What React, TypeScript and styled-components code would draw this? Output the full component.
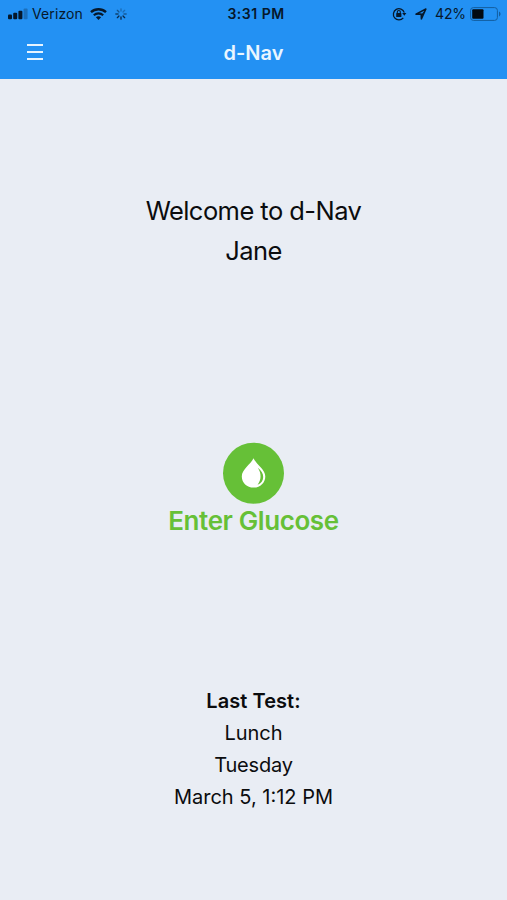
import React from "react";
import styled, { createGlobalStyle } from "styled-components";

const GlobalStyle = createGlobalStyle`
  * { box-sizing: border-box; }
  body {
    margin: 0;
    background: #e9edf4;
    font-family: Inter, "Liberation Sans", sans-serif;
    color: #0b0c0e;
  }
`;

const Screen = styled.div`
  width: 507px;
  height: 900px;
  display: flex;
  flex-direction: column;
  background: #e9edf4;
  overflow: hidden;
`;

const Header = styled.header`
  height: 79px;
  flex: none;
  background: #2391f3;
`;

const StatusBar = styled.div`
  display: grid;
  grid-template-columns: 1fr auto 1fr;
  align-items: center;
  height: 27px;
  padding: 0 5px 0 8px;
  color: #06182b;
  font-size: 14px;
  line-height: 27px;
`;

const StatusGroup = styled.div<{ $end?: boolean }>`
  display: flex;
  align-items: center;
  justify-content: ${(p) => (p.$end ? "flex-end" : "flex-start")};
  svg { display: block; flex: none; }
`;

const Carrier = styled.span`
  margin: 0 7px 0 4px;
  letter-spacing: 0.1px;
`;

const Clock = styled.span`
  font-weight: 600;
  font-size: 14px;
  letter-spacing: 0.5px;
  padding-left: 2px;
`;

const Percent = styled.span`
  margin: 0 4px 0 8px;
  letter-spacing: -0.1px;
`;

const SpinnerSlot = styled.span`
  margin-left: 8px;
`;

const ArrowSlot = styled.span`
  margin-left: 8px;
`;

const NavBar = styled.div`
  display: grid;
  grid-template-columns: 60px 1fr 60px;
  align-items: center;
  height: 52px;
`;

const MenuButton = styled.button`
  border: 0;
  background: none;
  width: 16px;
  height: 16px;
  margin: -2px 0 0 27px;
  padding: 0;
  display: flex;
  flex-direction: column;
  justify-content: space-between;
`;

const MenuLine = styled.span`
  display: block;
  width: 16px;
  height: 2px;
  background: #e6f4ff;
`;

const Title = styled.h1`
  margin: 0;
  text-align: center;
  font-size: 20px;
  font-weight: 600;
  line-height: 52px;
  color: #eaf6ff;
`;

const Main = styled.main`
  flex: 1;
  display: flex;
  flex-direction: column;
  align-items: center;
`;

const Welcome = styled.section`
  margin-top: 112px;
  text-align: center;
  font-size: 25.5px;
  line-height: 39.5px;
  letter-spacing: -0.55px;
`;

const GlucoseButton = styled.button`
  margin-top: 172px;
  border: 0;
  padding: 0;
  background: none;
  display: flex;
  flex-direction: column;
  align-items: center;
  font-family: inherit;
  color: #66c037;
  svg { display: block; }
`;

const GlucoseLabel = styled.span`
  margin-top: 1px;
  font-size: 26px;
  font-weight: 600;
  line-height: 32px;
  letter-spacing: -0.4px;
`;

const LastTest = styled.section`
  margin-top: 148px;
  text-align: center;
  font-size: 20px;
  line-height: 32px;
`;

const TestLine = styled.div<{ $spacing: number; $strong?: boolean }>`
  letter-spacing: ${(p) => p.$spacing}px;
  font-weight: ${(p) => (p.$strong ? 600 : 400)};
`;

const Signal = () => (
  <svg width="20" height="12" viewBox="0 0 20 12" fill="#06182b">
    <rect x="0" y="6.5" width="4" height="4.7" rx="1" />
    <rect x="5.2" y="4.8" width="4" height="6.4" rx="1" />
    <rect x="10.4" y="2.7" width="4" height="8.5" rx="1" />
    <rect x="15.6" y="0.5" width="4" height="10.7" rx="1" opacity="0.28" />
  </svg>
);

const Wifi = () => (
  <svg width="17" height="12" viewBox="0 0 17 12" fill="none" stroke="#06182b">
    <path d="M1 4.2C5.2 0.3 11.8 0.3 16 4.2" strokeWidth="2.4" />
    <path d="M3.8 7.2C6.5 4.7 10.5 4.7 13.2 7.2" strokeWidth="2.1" />
    <path d="M8.5 12L5.9 9.3C7.4 8 9.6 8 11.1 9.3Z" fill="#06182b" stroke="none" />
  </svg>
);

const Spinner = () => (
  <svg width="12" height="12" viewBox="0 0 12 12" stroke="#06182b" strokeWidth="1.3" strokeLinecap="round">
    {[0.3, 0.3, 0.45, 0.85, 0.85, 0.85, 0.65, 0.5].map((opacity, i) => (
      <path key={i} d="M6 3.1V0.8" transform={`rotate(${i * 45} 6 6)`} opacity={opacity} />
    ))}
  </svg>
);

const RotationLock = () => (
  <svg width="15" height="14" viewBox="0 0 15 14" fill="none" stroke="#06182b">
    <path d="M12.3 5.6A5.6 5.6 0 1 0 11.3 10.9" strokeWidth="1.3" />
    <path d="M10.2 6H14.4L12.3 8.7Z" fill="#06182b" stroke="none" />
    <rect x="4.2" y="6.1" width="5.2" height="4" rx="0.6" fill="#06182b" stroke="none" />
    <path d="M5.3 6.4V5A1.5 1.5 0 0 1 8.3 5V6.4" strokeWidth="1.1" />
  </svg>
);

const LocationArrow = () => (
  <svg width="12" height="12" viewBox="0 0 12 12">
    <path
      d="M1 6.2L10.9 1L6.4 10.9L6.2 6.1Z"
      fill="none"
      stroke="#06182b"
      strokeWidth="1.5"
      strokeLinejoin="round"
    />
    <path d="M7 5.8L10.8 1.2L6.6 9.5Z" fill="#06182b" />
  </svg>
);

const Battery = () => (
  <svg width="32" height="14" viewBox="0 0 32 14">
    <rect x="0.6" y="0.6" width="26.8" height="12.8" rx="2.8" fill="none" stroke="#135d9e" strokeWidth="1" />
    <rect x="2.2" y="2.2" width="11.3" height="9.6" rx="1" fill="#020a12" />
    <path d="M29 4.6C31 5.4 31 8.6 29 9.4Z" fill="#135d9e" />
  </svg>
);

const DropIcon = () => (
  <svg width="61" height="62" viewBox="0 0 61 62">
    <circle cx="30.5" cy="31.2" r="30.5" fill="#66c037" />
    <path
      d="M30.5 16.3C33.3 22.3 42.3 27.6 42.3 34.4C42.3 40.8 37 45.6 30.5 45.6C24 45.6 18.8 40.8 18.8 34.4C18.8 27.6 27.7 22.3 30.5 16.3Z"
      fill="#fff"
    />
    <path
      d="M34.8 25.8C38.5 28.8 40.2 31.8 40.2 35C40.2 38.5 38.2 41.4 34.6 42.8C38.5 38 38.6 31.4 34.8 25.8Z"
      fill="#66c037"
    />
  </svg>
);

export default function App() {
  return (
    <>
      <GlobalStyle />
      <Screen>
        <Header>
          <StatusBar>
            <StatusGroup>
              <Signal />
              <Carrier>Verizon</Carrier>
              <Wifi />
              <SpinnerSlot><Spinner /></SpinnerSlot>
            </StatusGroup>
            <Clock>3:31 PM</Clock>
            <StatusGroup $end>
              <RotationLock />
              <ArrowSlot><LocationArrow /></ArrowSlot>
              <Percent>42%</Percent>
              <Battery />
            </StatusGroup>
          </StatusBar>
          <NavBar>
            <MenuButton aria-label="Menu">
              <MenuLine />
              <MenuLine />
              <MenuLine />
            </MenuButton>
            <Title>d-Nav</Title>
          </NavBar>
        </Header>
        <Main>
          <Welcome>
            <div>Welcome to d-Nav</div>
            <div>Jane</div>
          </Welcome>
          <GlucoseButton>
            <DropIcon />
            <GlucoseLabel>Enter Glucose</GlucoseLabel>
          </GlucoseButton>
          <LastTest>
            <TestLine $spacing={0.05} $strong>Last Test:</TestLine>
            <TestLine $spacing={-0.05}>Lunch</TestLine>
            <TestLine $spacing={-0.2}>Tuesday</TestLine>
            <TestLine $spacing={0}>March 5, 1:12 PM</TestLine>
          </LastTest>
        </Main>
      </Screen>
    </>
  );
}
